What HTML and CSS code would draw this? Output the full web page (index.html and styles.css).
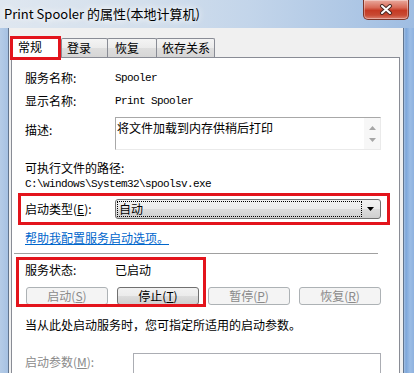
FILE: index.html
```html
<!DOCTYPE html>
<html lang="zh-CN">
<head>
  <meta charset="UTF-8" />
  <title>Print Spooler 的属性(本地计算机)</title>
  <link rel="stylesheet" href="styles.css">
</head>
<body>
  <div class="window">

    <!-- 标题栏 -->
    <div class="titlebar">
      <span class="title">Print Spooler 的属性(本地计算机)</span>
      <button class="close" aria-label="关闭">
        <svg width="14" height="11" viewBox="0 0 14 11">
          <path d="M3 2 L11 9 M11 2 L3 9" stroke="#4a2a24" stroke-width="4" stroke-linecap="round" />
          <path d="M3 2 L11 9 M11 2 L3 9" stroke="#ffffff" stroke-width="2" stroke-linecap="round" />
        </svg>
      </button>
    </div>

    <div class="frame">
      <div class="client">
        <div class="tabs">
          <div class="tab active">常规</div>
          <div class="tab tab-logon">登录</div>
          <div class="tab tab-recover">恢复</div>
          <div class="tab tab-deps">依存关系</div>
        </div>

        <div class="panel">
          <div class="row">
            <span>服务名称:</span>
            <span class="mono">Spooler</span>
          </div>
          <div class="row row-gap">
            <span>显示名称:</span>
            <span class="mono">Print Spooler</span>
          </div>
          <div class="row desc-row">
            <span class="desc-label">描述:</span>
            <div class="desc-box">
              <div class="desc-text">将文件加载到内存供稍后打印</div>
              <div class="scroll">
                <svg width="7" height="4" viewBox="0 0 7 4"><path d="M0 4 L3.5 0 L7 4 Z" fill="#a6a6a6" /></svg>
                <svg width="7" height="4" viewBox="0 0 7 4"><path d="M0 0 L3.5 4 L7 0 Z" fill="#a6a6a6" /></svg>
              </div>
            </div>
          </div>

          <div class="path-label">可执行文件的路径:</div>
          <div class="mono path">C:\windows\System32\spoolsv.exe</div>

          <div class="row type-row">
            <span>启动类型(<u>E</u>):</span>
            <div class="select">
              <div class="select-value">自动</div>
              <div class="select-arrow">
                <svg width="7" height="4" viewBox="0 0 7 4"><path d="M0 0 L3.5 4 L7 0 Z" fill="#000" /></svg>
              </div>
            </div>
          </div>

          <a class="help-link" href="#">帮助我配置服务启动选项。</a>

          <div class="separator"></div>

          <div class="status-block">
            <div class="row">
              <span>服务状态:</span>
              <span>已启动</span>
            </div>
            <div class="buttons">
              <button class="btn" disabled>启动(<u>S</u>)</button>
              <button class="btn">停止(<u>T</u>)</button>
              <button class="btn" disabled>暂停(<u>P</u>)</button>
              <button class="btn" disabled>恢复(<u>R</u>)</button>
            </div>
          </div>

          <p class="hint">当从此处启动服务时，您可指定所适用的启动参数。</p>

          <div class="param-row">
            <span class="disabled-text">启动参数(<u>M</u>):</span>
            <div class="param-input"></div>
          </div>
        </div>
      </div>
    </div>
  </div>
</body>
</html>
```

FILE: styles.css
```css
* {
  box-sizing: border-box;
}

body {
  margin: 0;
  font-family: "Noto Sans CJK SC", "Noto Sans", sans-serif;
  font-size: 12px;
  color: #000;
  background-color: #a9c3e3;
}

.window {
  width: 414px;
  height: 373px;
  overflow: hidden;
  display: flex;
  flex-direction: column;
}

/* 标题栏 */
.titlebar {
  height: 28px;
  flex: none;
  display: flex;
  justify-content: space-between;
  align-items: flex-start;
  padding: 0 5px 0 4px;
  background: linear-gradient(90deg, #dfe7f0 0%, #d3dfec 35%, #c3d5ea 60%, #aec7e5 85%, #9fbde2 100%);
}

.title {
  line-height: 28px;
  font-size: 13px;
  white-space: nowrap;
  text-shadow: 0 0 6px #fff, 0 0 10px #fff;
}

.close {
  width: 46px;
  height: 20px;
  padding: 0;
  display: flex;
  align-items: center;
  justify-content: center;
  border: 1px solid #7c3428;
  border-top: none;
  border-radius: 0 0 5px 5px;
  background: linear-gradient(#e9aa9e 0%, #d86a57 40%, #c53a24 55%, #c84a33 80%, #dc8170 100%);
  box-shadow: inset 0 0 0 1px rgba(255, 255, 255, 0.35);
}

.frame {
  flex: 1;
  display: flex;
  padding: 0 10px 0 8px;
  background: linear-gradient(90deg, #b5cce7 0, #a6c1e2 8px, #a6c1e2 404px, #7ea7da 406px, #9cbde5 410px, #8fb2df 414px);
}

.client {
  flex: 1;
  display: flex;
  flex-direction: column;
  background-color: #f0f0f0;
  border-left: 1px solid #62758e;
  border-right: 1px solid #62758e;
  padding: 9px 3px 0 2px;
}

/* 选项卡 */
.tabs {
  height: 20px;
  flex: none;
  display: flex;
  align-items: flex-end;
  position: relative;
  z-index: 1;
}

.tab {
  height: 19px;
  line-height: 17px;
  padding-left: 5px;
  border: 1px solid #898c95;
  border-bottom: none;
  border-radius: 2px 2px 0 0;
  background: linear-gradient(#f4f4f4, #ebebeb 50%, #dedede 50%, #d6d6d6);
  white-space: nowrap;
}

.tab.active {
  position: relative;
  width: 49px;
  height: 22px;
  margin-bottom: -1px;
  padding-left: 6px;
  line-height: 19px;
  background: #fff;
}

.tab.active::after {
  content: "";
  position: absolute;
  top: -1px;
  left: -2px;
  right: -2px;
  bottom: -2px;
  border: 3px solid #e3141c;
}

.tab-logon {
  width: 47px;
  margin-left: 1px;
}

.tab-recover {
  width: 50px;
  margin-left: -1px;
  padding-left: 7px;
}

.tab-deps {
  width: 59px;
  margin-left: -1px;
}

/* 面板 */
.panel {
  flex: 1;
  background: #fff;
  border: 1px solid #898c95;
  padding: 12px 18px 0 13px;
  line-height: 16px;
}

.row {
  display: grid;
  grid-template-columns: 90px 1fr;
  align-items: center;
}

.row-gap {
  margin-top: 7px;
}

.mono {
  font-family: "Liberation Mono", monospace;
  font-size: 11px;
  letter-spacing: -0.6px;
}

.desc-row {
  margin-top: 8px;
  align-items: start;
}

.desc-label {
  padding-top: 5px;
}

.desc-box {
  height: 33px;
  display: flex;
  border: 1px solid #a8a8a8;
  border-right-color: #eaeaea;
  border-bottom-color: #eaeaea;
}

.desc-text {
  flex: 1;
  padding: 2px 0 0 1px;
}

.scroll {
  width: 16px;
  display: flex;
  flex-direction: column;
  justify-content: space-around;
  align-items: center;
  padding: 4px 0 3px;
  background: #f7f7f7;
}

.path-label {
  margin-top: 10px;
}

.type-row {
  position: relative;
  margin-top: 7px;
}

.type-row::after {
  content: "";
  position: absolute;
  top: -6px;
  left: -7px;
  right: -9px;
  bottom: -6px;
  border: 3px solid #e3141c;
}

.select {
  height: 20px;
  display: flex;
  padding: 1px;
  border: 1px solid #707070;
  border-radius: 3px;
  background: linear-gradient(#f2f2f2, #ebebeb 50%, #dddddd 50%, #cfcfcf);
}

.select-value {
  flex: 1;
  line-height: 14px;
  padding-left: 1px;
  border: 1px dotted #000;
}

.select-arrow {
  width: 17px;
  display: flex;
  align-items: center;
  justify-content: center;
}

.help-link {
  display: block;
  margin-top: 11px;
  color: #0066cc;
  text-decoration: underline;
}

.separator {
  margin: 7px 3px 0 -11px;
  border-top: 1px solid #a0a0a0;
}

.status-block {
  position: relative;
  margin-top: 8px;
}

.status-block::after {
  content: "";
  position: absolute;
  top: -5px;
  left: -9px;
  width: 184px;
  bottom: -2px;
  border: 3px solid #e3141c;
}

.buttons {
  display: grid;
  grid-template-columns: repeat(4, 82px);
  gap: 9px;
  margin-top: 9px;
  padding-left: 1px;
}

.btn {
  height: 18px;
  padding: 0;
  font: inherit;
  line-height: 14px;
  color: #000;
  border: 1px solid #707070;
  border-radius: 3px;
  background: linear-gradient(#f2f2f2, #ebebeb 50%, #dddddd 50%, #cfcfcf);
}

.btn:disabled {
  color: #8a8a8a;
  border-color: #adb2b5;
  background: #f4f4f4;
}

.hint {
  margin: 12px 0 0;
}

.param-row {
  display: flex;
  align-items: flex-start;
  margin-top: 20px;
}

.disabled-text {
  width: 108px;
  padding-top: 1px;
  color: #8a8a8a;
}

.param-input {
  width: 248px;
  height: 24px;
  border: 1px solid #abadb3;
  background: #fff;
}
```
